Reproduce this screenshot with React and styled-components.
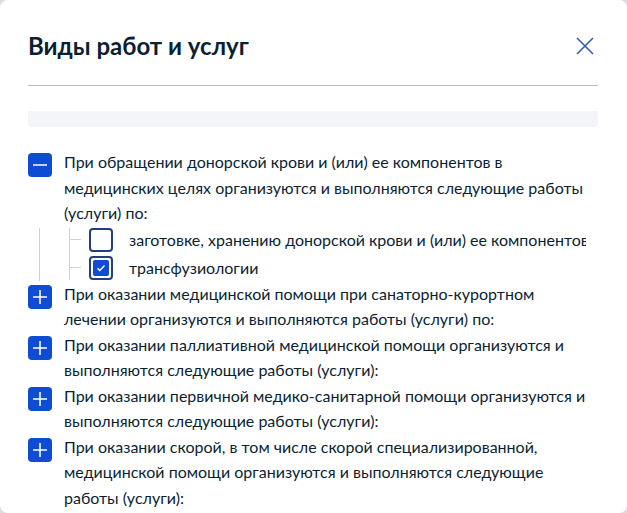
import React, { useState } from 'react';
import styled, { createGlobalStyle } from 'styled-components';

const groups = [
  {
    id: 1,
    text: 'При обращении донорской крови и (или) ее компонентов в медицинских целях организуются и выполняются следующие работы (услуги) по:',
    open: true,
    items: [
      { id: 11, text: 'заготовке, хранению донорской крови и (или) ее компонентов' },
      { id: 12, text: 'трансфузиологии' },
    ],
  },
  {
    id: 2,
    text: 'При оказании медицинской помощи при санаторно-курортном лечении организуются и выполняются работы (услуги) по:',
  },
  {
    id: 3,
    text: 'При оказании паллиативной медицинской помощи организуются и выполняются следующие работы (услуги):',
  },
  {
    id: 4,
    text: 'При оказании первичной медико-санитарной помощи организуются и выполняются следующие работы (услуги):',
  },
  {
    id: 5,
    text: 'При оказании скорой, в том числе скорой специализированной, медицинской помощи организуются и выполняются следующие работы (услуги):',
  },
];

function ToggleIcon({ open }) {
  return (
    <svg width="24" height="24" viewBox="0 0 24 24">
      <path d="M5 12h14" stroke="#fff" strokeWidth="1.6" />
      {!open && <path d="M12 5v14" stroke="#fff" strokeWidth="1.6" />}
    </svg>
  );
}

function App() {
  const [checked, setChecked] = useState({ 11: false, 12: true });

  const toggle = (id) => setChecked({ ...checked, [id]: !checked[id] });

  const renderGroups = () => {
    return groups.map(({ id, text, open, items }) => (
      <Group key={id}>
        <Toggle type="button">
          <ToggleIcon open={open} />
        </Toggle>
        <GroupText>{text}</GroupText>
        {open && (
          <SubList>
            <SubInner>
              {items.map((item) => (
                <SubItem key={item.id} onClick={() => toggle(item.id)}>
                  <Tick />
                  <Checkbox $checked={checked[item.id]}>
                    {checked[item.id] && (
                      <svg width="16" height="16" viewBox="0 0 16 16">
                        <path d="M4.5 8.2l2.3 2.2 4.7-4.8" fill="none" stroke="#fff" strokeWidth="1.4" />
                      </svg>
                    )}
                  </Checkbox>
                  <SubText>{item.text}</SubText>
                </SubItem>
              ))}
            </SubInner>
          </SubList>
        )}
      </Group>
    ));
  };

  return (
    <>
      <GlobalStyle />
      <Modal>
        <Header>
          <Title>Виды работ и услуг</Title>
          <Close type="button" aria-label="Закрыть">
            <svg width="20" height="20" viewBox="0 0 20 20">
              <path d="M2 2l16 16M18 2L2 18" stroke="#2f5cb8" strokeWidth="1.6" />
            </svg>
          </Close>
        </Header>
        <GreyBar />
        <Scroll>
          <List>{renderGroups()}</List>
        </Scroll>
      </Modal>
    </>
  );
}

const GlobalStyle = createGlobalStyle`
  body {
    margin: 0;
    background: #d9dde2;
    font-family: Lato, "Noto Sans", sans-serif;
    color: #0b1f33;
  }
`;

const Modal = styled.div`
  height: 513px;
  background: #fff;
  border-radius: 8px;
  overflow: hidden;
`;

const Header = styled.header`
  display: flex;
  justify-content: space-between;
  align-items: center;
  margin: 0 29px 0 28px;
  padding: 30px 0 23px;
  border-bottom: 1px solid #b4bcc6;
`;

const Title = styled.h2`
  margin: 0;
  font-size: 24px;
  line-height: 32px;
  font-weight: 700;
  color: #0b1f33;
`;

const Close = styled.button`
  display: flex;
  padding: 0;
  margin-right: 3px;
  border: none;
  background: none;
  cursor: pointer;
`;

const GreyBar = styled.div`
  margin: 25px 29px 0 28px;
  height: 16px;
  background: #f3f5f8;
  border-radius: 0 0 4px 4px;
`;

const Scroll = styled.div`
  margin: 22px 0 0 28px;
  width: 558px;
  overflow: hidden;
`;

const List = styled.div`
  width: 570px;
  display: flex;
  flex-direction: column;
`;

const Group = styled.div`
  display: grid;
  grid-template-columns: 24px 1fr;
  column-gap: 12px;
  align-items: start;
`;

const Toggle = styled.button`
  width: 24px;
  height: 24px;
  margin-top: 4px;
  padding: 0;
  border: none;
  border-radius: 4px;
  background: #0d4cd3;
  display: flex;
  cursor: pointer;
`;

const GroupText = styled.p`
  margin: 0;
  font-size: 16px;
  line-height: 25.5px;
  width: 530px;
`;

const SubList = styled.div`
  grid-column: 1 / -1;
  margin: 2px 0 0 11px;
  padding: 0 0 1px 29px;
  border-left: 1px solid #cdd2d8;
`;

const SubInner = styled.div`
  display: flex;
  flex-direction: column;
  gap: 4px;
  border-left: 1px solid #cdd2d8;
`;

const SubItem = styled.label`
  display: flex;
  align-items: center;
  height: 24px;
  cursor: pointer;
`;

const Tick = styled.span`
  width: 11px;
  height: 1px;
  background: #cdd2d8;
  margin-right: 8px;
  flex-shrink: 0;
`;

const Checkbox = styled.span`
  box-sizing: border-box;
  width: 24px;
  height: 24px;
  flex-shrink: 0;
  border: 2px solid #233f80;
  border-radius: 4px;
  display: flex;
  align-items: center;
  justify-content: center;

  svg {
    background: ${(p) => (p.$checked ? '#0d4cd3' : 'transparent')};
    border-radius: 2px;
  }
`;

const SubText = styled.span`
  margin-left: 16px;
  font-size: 16px;
  line-height: 24px;
  white-space: nowrap;
`;

export default App;
